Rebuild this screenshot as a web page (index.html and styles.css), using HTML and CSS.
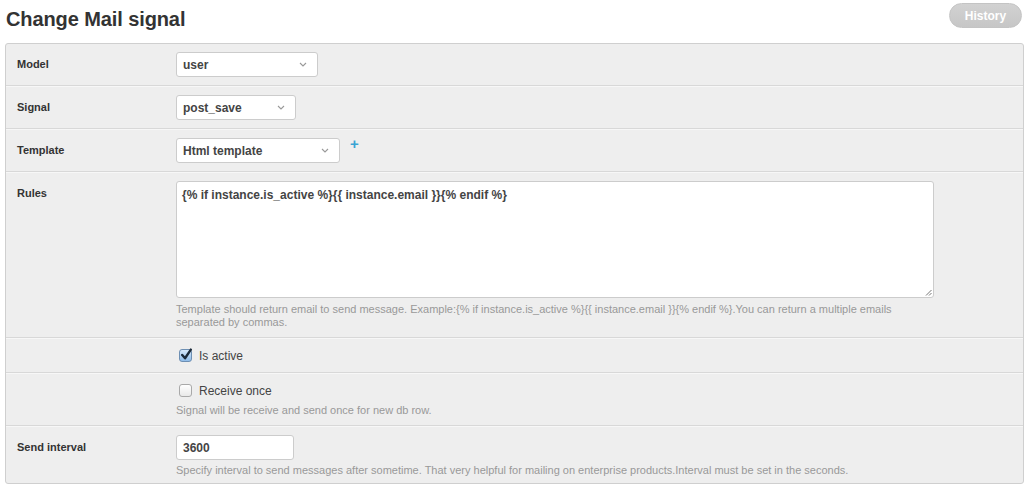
FILE: index.html
```html
<!DOCTYPE html>
<html>
<head>
<meta charset="utf-8">
<link rel="stylesheet" href="styles.css">
</head>
<body>
<div class="page">
  <div class="header">
    <h1 class="title">Change Mail signal</h1>
    <a class="history">History</a>
  </div>
  <div class="box">
    <div class="row">
      <div class="label">Model</div>
      <div class="field">
        <div class="select w-model"><span>user</span><svg class="chev" width="8" height="5" viewBox="0 0 8 5"><path d="M1 1l3 3 3-3" fill="none" stroke="#999" stroke-width="1.1"/></svg></div>
      </div>
    </div>
    <div class="row">
      <div class="label">Signal</div>
      <div class="field">
        <div class="select w-signal"><span>post_save</span><svg class="chev" width="8" height="5" viewBox="0 0 8 5"><path d="M1 1l3 3 3-3" fill="none" stroke="#999" stroke-width="1.1"/></svg></div>
      </div>
    </div>
    <div class="row">
      <div class="label">Template</div>
      <div class="field inline">
        <div class="select w-template"><span>Html template</span><svg class="chev" width="8" height="5" viewBox="0 0 8 5"><path d="M1 1l3 3 3-3" fill="none" stroke="#999" stroke-width="1.1"/></svg></div>
        <span class="add">+</span>
      </div>
    </div>
    <div class="row">
      <div class="label">Rules</div>
      <div class="field">
        <div class="textarea">{% if instance.is_active %}{{ instance.email }}{% endif %}<svg class="grip" width="7" height="7" viewBox="0 0 7 7"><path d="M1 6.5L6.5 1M4 6.5L6.5 4" stroke="#777" stroke-width="1"/></svg></div>
        <p class="help help-wide">Template should return email to send message. Example:{% if instance.is_active %}{{ instance.email }}{% endif %}.You can return a multiple emails separated by commas.</p>
      </div>
    </div>
    <div class="row row-check">
      <div class="label"></div>
      <div class="field">
        <label class="check"><span class="cb checked"><svg width="13" height="13" viewBox="0 0 13 13"><path d="M3 6.5l2.6 3L11 1.5" fill="none" stroke="#1b2a3a" stroke-width="2.2" stroke-linecap="round" stroke-linejoin="round"/></svg></span>Is active</label>
      </div>
    </div>
    <div class="row row-check">
      <div class="label"></div>
      <div class="field">
        <label class="check"><span class="cb"></span>Receive once</label>
        <p class="help help-check">Signal will be receive and send once for new db row.</p>
      </div>
    </div>
    <div class="row last">
      <div class="label">Send interval</div>
      <div class="field">
        <div class="input">3600</div>
        <p class="help">Specify interval to send messages after sometime. That very helpful for mailing on enterprise products.Interval must be set in the seconds.</p>
      </div>
    </div>
  </div>
</div>
</body>
</html>
```

FILE: styles.css
```css
* { box-sizing: border-box; }
html, body { margin: 0; padding: 0; background: #fff; }
body { font-family: "Liberation Sans", Arial, sans-serif; color: #444; }
.page { padding: 0 6px 0 5px; }
.header { display: flex; justify-content: space-between; align-items: flex-start; height: 43px; }
.title { margin: 7px 0 0 1px; font-size: 20px; line-height: 24px; font-weight: bold; color: #333; letter-spacing: -0.1px; }
.history {
  margin-top: 3px; margin-right: 2px; height: 25px; width: 73px;
  display: flex; align-items: center; justify-content: center;
  background: linear-gradient(#d2d2d2, #c6c6c6); border: 1px solid #c4c4c4;
  border-radius: 13px; color: #fff; font-size: 12px; font-weight: bold;
}
.box { background: #eee; border: 1px solid #cfcfcf; border-radius: 3px; }
.row { display: flex; padding: 9px 0 8px 11px; border-bottom: 1px solid #d8d8d8; box-shadow: inset 0 1px 0 #f7f7f7; }
.row:first-child { box-shadow: none; padding-top: 8px; }
.row.last { border-bottom: none; padding-bottom: 6px; padding-top: 9px; }
.label { width: 159px; flex: none; font-size: 11px; font-weight: bold; line-height: 25px; color: #333; }
.field { flex: none; }
.field.inline { display: flex; align-items: flex-start; }
.select {
  height: 25px; border: 1px solid #ccc; border-radius: 3px; background: #fff;
  display: flex; align-items: center; justify-content: space-between;
  padding: 0 10px 0 6px; font-size: 12px; font-weight: bold; color: #444;
}
.w-model { width: 142px; }
.w-signal { width: 120px; }
.w-template { width: 164px; }
.chev { display: block; }
.add { color: #3aa4d3; font-weight: bold; font-size: 15px; line-height: 12px; margin-left: 10px; margin-top: 0px; }
.textarea {
  position: relative; width: 758px; height: 117px; background: #fff;
  border: 1px solid #ccc; border-radius: 3px; padding: 6px 5px;
  font-size: 12px; font-weight: bold; line-height: 14px; color: #444;
}
.grip { position: absolute; right: 1px; bottom: 1px; }
.help { margin: 4px 0 0; font-size: 11px; line-height: 13px; color: #999; }
.help-wide { width: 758px; margin-top: 5px; }
.row-check { padding-top: 9px; }
.check { display: flex; align-items: center; height: 17px; font-size: 12px; color: #444; padding-left: 3px; }
.cb {
  width: 13px; height: 13px; border: 1px solid #a9a9a9; border-radius: 3px;
  background: linear-gradient(#fff, #e9e9e9); margin-right: 7px; position: relative; flex: none;
}
.cb.checked { background: linear-gradient(#d6e8fb, #8fbce9); border-color: #6d8fb3; }
.cb svg { position: absolute; left: -1px; top: -2px; width: 14px; height: 14px; }
.help-check { margin-top: 5px; }
.input {
  width: 118px; height: 25px; border: 1px solid #ccc; border-radius: 3px; background: #fff;
  padding: 0 6px; display: flex; align-items: center; font-size: 12px; font-weight: bold; color: #444;
}
```
